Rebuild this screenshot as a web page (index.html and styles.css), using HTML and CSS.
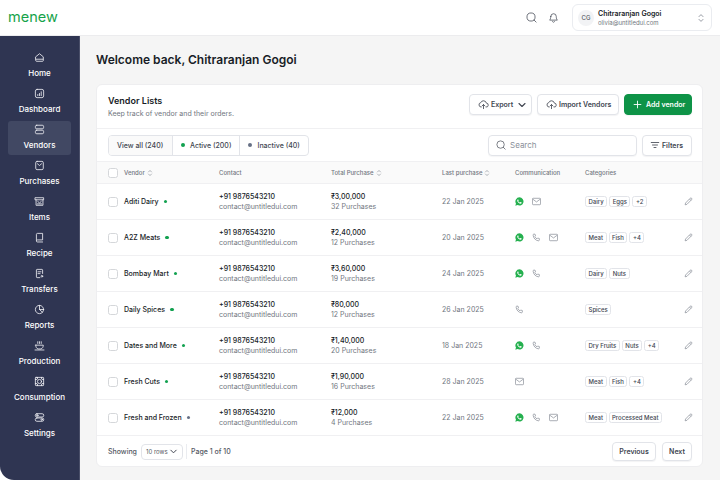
FILE: index.html
```html
<!DOCTYPE html>
<html lang="en">
<head>
<meta charset="utf-8">
<title>Vendors</title>
<link rel="stylesheet" href="styles.css">
</head>
<body>
<svg width="0" height="0" class="defs">
  <defs>
    <symbol id="wa" viewBox="0 0 16 16"><path fill="#25b04f" d="M8 .6a7.300 7.300 0 0 0-6.300 11L.6 15.400l3.900-1A7.300 7.300 0 1 0 8 .6z"/><path fill="#fff" d="M5.600 4.200c-.3 0-.7.1-1 .5-.4.5-.8 1.100-.7 2 .2 1.100 1 2.400 2.200 3.500 1.400 1.200 2.600 1.800 3.700 1.800.9 0 1.700-.6 2-1.400.1-.4.1-.7 0-.8l-1.700-.9c-.2-.1-.4 0-.5.1l-.7.8c-.1.1-.3.2-.5.1-1.100-.5-2-1.300-2.600-2.400-.1-.2 0-.3.1-.4l.5-.7c.1-.2.100-.3 0-.5l-.7-1.500c-.1-.2-.3-.2-.5-.2z"/></symbol>
    <symbol id="phone" viewBox="0 0 16 16"><path fill="none" stroke="#8b909a" stroke-width="1.300" stroke-linejoin="round" d="M3 2h2.300l1 3-1.400 1.200c.8 1.900 2.200 3.300 4 4.100l1.200-1.400 3 1V12.300c0 .9-.7 1.700-1.600 1.600C6.500 13.400 2.600 9.500 2 4 1.900 2.800 2.300 2 3 2z"/></symbol>
    <symbol id="mail" viewBox="0 0 16 16"><rect x=".8" y="2.300" width="14.400" height="11.400" rx="1.400" fill="none" stroke="#8b909a" stroke-width="1.300"/><path d="M1.300 3.800 8 8.800l6.700-5" fill="none" stroke="#8b909a" stroke-width="1.300"/></symbol>
    <symbol id="pen" viewBox="0 0 16 16"><path fill="none" stroke="#8b909a" stroke-width="1.300" stroke-linejoin="round" d="M11 2.200a1.500 1.500 0 0 1 2.500 2.500l-8.300 8.400-3.200.8.800-3.200zM9.800 3.600l2.500 2.500"/></symbol>
    <symbol id="sort" viewBox="0 0 8 10"><path fill="none" stroke="#8b909a" stroke-width=".9" stroke-linecap="round" stroke-linejoin="round" d="M2 3.600 4 1.600l2 2M2 6.400l2 2 2-2"/></symbol>
    <symbol id="cloud" viewBox="0 0 16 16"><path fill="none" stroke="#414651" stroke-width="1.200" stroke-linecap="round" stroke-linejoin="round" d="M4.500 11.800A3.300 3.300 0 0 1 4 5.300a4.300 4.300 0 0 1 8.200.7 2.900 2.900 0 0 1-.4 5.800M8 14V8.200M5.800 10.200 8 8l2.200 2.200"/></symbol>
    <symbol id="chev" viewBox="0 0 10 10"><path fill="none" stroke="#414651" stroke-width="1.100" stroke-linecap="round" stroke-linejoin="round" d="M2 3.500 5 6.500l3-3"/></symbol>
    <symbol id="search" viewBox="0 0 16 16"><circle cx="7.300" cy="7.300" r="5.900" fill="none" stroke="#535862" stroke-width="1.200"/><path d="m11.700 11.700 3 3" stroke="#535862" stroke-width="1.200" stroke-linecap="round"/></symbol>
  </defs>
</svg>
<div class="app">
  <header class="topbar">
    <div class="logo">menew</div>
    <div class="top-actions">
      <svg class="top-icon" viewBox="0 0 16 16"><use href="#search"/></svg>
      <svg class="top-icon" viewBox="0 0 16 16"><path fill="none" stroke="#535862" stroke-width="1.200" stroke-linecap="round" stroke-linejoin="round" d="M4 6.500a4 4 0 0 1 8 0c0 3 .8 4.300 1.600 5.300H2.400C3.200 10.800 4 9.500 4 6.500zM6.500 14a1.700 1.700 0 0 0 3 0"/></svg>
      <div class="user">
        <div class="avatar">CG</div>
        <div class="user-text"><div class="user-name">Chitraranjan Gogoi</div><div class="user-mail">olivia@untitledui.com</div></div>
        <svg class="user-sort" viewBox="0 0 8 10"><use href="#sort"/></svg>
      </div>
    </div>
  </header>
  <div class="body">
    <nav class="sidebar">
      <a class="nav-item"><svg viewBox="0 0 16 16"><path d="M2.500 7 8 2.500 13.500 7v5.500c0 .6-.4 1-1 1h-9c-.6 0-1-.4-1-1zM3 10.500h10"/></svg><span>Home</span></a>
      <a class="nav-item"><svg viewBox="0 0 16 16"><rect x="2" y="2" width="12" height="12" rx="2.500"/><path d="M5.500 11V9.500M8 11V8M10.500 11V5.500"/></svg><span>Dashboard</span></a>
      <a class="nav-item active"><svg viewBox="0 0 16 16"><rect x="2" y="1.800" width="12" height="5.200" rx="2"/><rect x="2" y="9" width="12" height="5.200" rx="2"/></svg><span>Vendors</span></a>
      <a class="nav-item"><svg viewBox="0 0 16 16"><rect x="2.500" y="2" width="11" height="12" rx="2"/><path d="M5 5.500 8 8l3-2.500"/></svg><span>Purchases</span></a>
      <a class="nav-item"><svg viewBox="0 0 16 16"><path d="M2 2.500h12v3H2zM3 5.500v8h10v-8M5.500 8 8 10l2.500-2M5 11.500h6"/></svg><span>Items</span></a>
      <a class="nav-item"><svg viewBox="0 0 16 16"><path d="M3.500 12V3.500c0-.9.600-1.500 1.500-1.500h7.500v9.500H5a1.500 1.500 0 0 0 0 3h7.500"/></svg><span>Recipe</span></a>
      <a class="nav-item"><svg viewBox="0 0 16 16"><path d="M12.500 8V3c0-.6-.4-1-1-1h-7c-.6 0-1 .4-1 1v10c0 .6.400 1 1 1h4M5.800 5.500h4.400M5.800 8.200h3"/><circle cx="11.500" cy="12" r="1.200"/></svg><span>Transfers</span></a>
      <a class="nav-item"><svg viewBox="0 0 16 16"><circle cx="8" cy="8" r="6"/><path d="M8 2v6l4.300 4M8 8h6"/></svg><span>Reports</span></a>
      <a class="nav-item"><svg viewBox="0 0 16 16"><path d="M2.500 7.500h11c0 3-1.500 5-3.500 5.500H6c-2-.5-3.500-2.500-3.500-5.500zM5.500 5V2.500M8 5V2.500M10.500 5V2.500M1.500 14.500h13"/></svg><span>Production</span></a>
      <a class="nav-item"><svg viewBox="0 0 16 16"><rect x="2" y="2" width="12" height="12" rx="1"/><circle cx="8" cy="8" r="3"/><path d="M2 5h2M12 5h2M2 11h2M12 11h2M5 2v2M11 2v2M5 12v2M11 12v2"/></svg><span>Consumption</span></a>
      <a class="nav-item"><svg viewBox="0 0 16 16"><rect x="1.800" y="2.500" width="12.400" height="4.800" rx="2.400"/><rect x="1.800" y="8.700" width="12.400" height="4.800" rx="2.400"/><circle cx="4.800" cy="4.900" r="1.100"/><circle cx="11.200" cy="11.100" r="1.100"/></svg><span>Settings</span></a>
    </nav>
    <main class="main">
      <h1 class="title">Welcome back, Chitraranjan Gogoi</h1>
      <section class="card">
        <div class="card-head">
          <div class="head-text">
            <h2 class="card-title">Vendor Lists</h2>
            <p class="card-sub">Keep track of vendor and their orders.</p>
          </div>
          <div class="head-actions">
            <button class="btn btn-export"><svg viewBox="0 0 16 16"><use href="#cloud"/></svg>Export<svg class="small" viewBox="0 0 10 10"><use href="#chev"/></svg></button>
            <button class="btn btn-import"><svg viewBox="0 0 16 16"><use href="#cloud"/></svg>Import Vendors</button>
            <button class="btn btn-add"><svg viewBox="0 0 12 12"><path d="M6 1.500v9M1.500 6h9" stroke="#fff" stroke-width="1.200" stroke-linecap="round"/></svg>Add vendor</button>
          </div>
        </div>
        <div class="toolbar">
          <div class="segments">
            <span class="seg seg-on">View all (240)</span>
            <span class="seg"><i class="dot green"></i>Active (200)</span>
            <span class="seg"><i class="dot grey"></i>Inactive (40)</span>
          </div>
          <div class="tool-right">
            <div class="search"><svg viewBox="0 0 16 16"><use href="#search"/></svg>Search</div>
            <button class="btn btn-filter"><svg viewBox="0 0 12 12"><path d="M1.500 3h9M3 6h6M4.800 9h2.400" stroke="#414651" stroke-width="1" stroke-linecap="round"/></svg>Filters</button>
          </div>
        </div>
        <div class="row row-head">
          <span class="check"></span>
          <span class="th">Vendor<svg viewBox="0 0 8 10"><use href="#sort"/></svg></span>
          <span class="th">Contact</span>
          <span class="th">Total Purchase<svg viewBox="0 0 8 10"><use href="#sort"/></svg></span>
          <span class="th">Last purchase<svg viewBox="0 0 8 10"><use href="#sort"/></svg></span>
          <span class="th">Communication</span>
          <span class="th">Categories</span>
          <span></span>
        </div>
        <div class="row">
          <span class="check"></span>
          <span class="vendor">Aditi Dairy<i class="dot green"></i></span>
          <span class="two"><b>+91 9876543210</b><em>contact@untitledui.com</em></span>
          <span class="two"><b>₹3,00,000</b><em>32 Purchases</em></span>
          <span class="date">22 Jan 2025</span>
          <span class="comm"><svg><use href="#wa"/></svg><svg><use href="#mail"/></svg></span>
          <span class="tags"><i>Dairy</i><i>Eggs</i><i>+2</i></span>
          <svg class="edit"><use href="#pen"/></svg>
        </div>
        <div class="row">
          <span class="check"></span>
          <span class="vendor">A2Z Meats<i class="dot green"></i></span>
          <span class="two"><b>+91 9876543210</b><em>contact@untitledui.com</em></span>
          <span class="two"><b>₹2,40,000</b><em>12 Purchases</em></span>
          <span class="date">20 Jan 2025</span>
          <span class="comm"><svg><use href="#wa"/></svg><svg><use href="#phone"/></svg><svg><use href="#mail"/></svg></span>
          <span class="tags"><i>Meat</i><i>Fish</i><i>+4</i></span>
          <svg class="edit"><use href="#pen"/></svg>
        </div>
        <div class="row">
          <span class="check"></span>
          <span class="vendor">Bombay Mart<i class="dot green"></i></span>
          <span class="two"><b>+91 9876543210</b><em>contact@untitledui.com</em></span>
          <span class="two"><b>₹3,60,000</b><em>19 Purchases</em></span>
          <span class="date">24 Jan 2025</span>
          <span class="comm"><svg><use href="#wa"/></svg><svg><use href="#phone"/></svg></span>
          <span class="tags"><i>Dairy</i><i>Nuts</i></span>
          <svg class="edit"><use href="#pen"/></svg>
        </div>
        <div class="row">
          <span class="check"></span>
          <span class="vendor">Daily Spices<i class="dot green"></i></span>
          <span class="two"><b>+91 9876543210</b><em>contact@untitledui.com</em></span>
          <span class="two"><b>₹80,000</b><em>12 Purchases</em></span>
          <span class="date">26 Jan 2025</span>
          <span class="comm"><svg><use href="#phone"/></svg></span>
          <span class="tags"><i>Spices</i></span>
          <svg class="edit"><use href="#pen"/></svg>
        </div>
        <div class="row">
          <span class="check"></span>
          <span class="vendor">Dates and More<i class="dot green"></i></span>
          <span class="two"><b>+91 9876543210</b><em>contact@untitledui.com</em></span>
          <span class="two"><b>₹1,40,000</b><em>20 Purchases</em></span>
          <span class="date">18 Jan 2025</span>
          <span class="comm"><svg><use href="#wa"/></svg><svg><use href="#phone"/></svg></span>
          <span class="tags"><i>Dry Fruits</i><i>Nuts</i><i>+4</i></span>
          <svg class="edit"><use href="#pen"/></svg>
        </div>
        <div class="row">
          <span class="check"></span>
          <span class="vendor">Fresh Cuts<i class="dot green"></i></span>
          <span class="two"><b>+91 9876543210</b><em>contact@untitledui.com</em></span>
          <span class="two"><b>₹1,90,000</b><em>16 Purchases</em></span>
          <span class="date">28 Jan 2025</span>
          <span class="comm"><svg><use href="#mail"/></svg></span>
          <span class="tags"><i>Meat</i><i>Fish</i><i>+4</i></span>
          <svg class="edit"><use href="#pen"/></svg>
        </div>
        <div class="row">
          <span class="check"></span>
          <span class="vendor">Fresh and Frozen<i class="dot grey"></i></span>
          <span class="two"><b>+91 9876543210</b><em>contact@untitledui.com</em></span>
          <span class="two"><b>₹12,000</b><em>4 Purchases</em></span>
          <span class="date">22 Jan 2025</span>
          <span class="comm"><svg><use href="#wa"/></svg><svg><use href="#phone"/></svg><svg><use href="#mail"/></svg></span>
          <span class="tags"><i>Meat</i><i>Processed Meat</i></span>
          <svg class="edit"><use href="#pen"/></svg>
        </div>
        <footer class="foot">
          <span class="foot-label">Showing</span>
          <span class="rows-select">10 rows<svg viewBox="0 0 10 10"><use href="#chev"/></svg></span>
          <span class="foot-page">Page 1 of 10</span>
          <span class="foot-nav"><button class="btn btn-prev">Previous</button><button class="btn btn-next">Next</button></span>
        </footer>
      </section>
    </main>
  </div>
</div>
</body>
</html>
```
FILE: styles.css
```css
* { box-sizing: border-box; }
html, body { margin: 0; padding: 0; }
body { width: 720px; height: 480px; overflow: hidden; background: #fff; font-family: Inter, "Liberation Sans", sans-serif; color: #181d27; }
.defs { display: block; height: 0; }
.app { display: flex; flex-direction: column; width: 720px; height: 480px; }

.topbar { height: 36px; flex: none; display: flex; align-items: center; justify-content: space-between; padding: 0 8px; background: #fff; border-bottom: 1px solid #ececee; }
.logo { font-family: Inter, sans-serif; font-size: 14.500px; font-weight: 400; color: #16a34a; line-height: 1; }
.top-actions { display: flex; align-items: center; }
.top-icon { width: 11px; height: 11px; margin-right: 11px; }
.user { width: 140px; height: 27px; margin-left: 2px; display: flex; align-items: center; padding: 0 5px; background: #fff; border: 1px solid #eaecf0; border-radius: 6px; }
.avatar { width: 16px; height: 16px; border-radius: 50%; background: #f2f3f5; color: #535862; font-size: 6px; font-weight: 500; display: flex; align-items: center; justify-content: center; margin-right: 4px; }
.user-name { font-size: 7px; font-weight: 600; line-height: 9px; color: #181d27; }
.user-mail { font-size: 6px; line-height: 9px; color: #717680; }
.user-sort { width: 8px; height: 10px; margin-left: auto; margin-right: 1px; }

.body { flex: 1; display: flex; min-height: 0; }
.sidebar { width: 80px; flex: none; padding: 13px 8px 0; display: flex; flex-direction: column; gap: 2px; background: #2f3552; border-right: 1px solid #4a4f69; border-bottom-left-radius: 14px; }
.nav-item { height: 34px; flex: none; display: flex; flex-direction: column; align-items: center; justify-content: flex-start; padding-top: 3px; border-radius: 3px; color: #fff; font-size: 8px; font-weight: 500; line-height: 10px; }
.nav-item svg { width: 11px; height: 11px; margin-bottom: 5px; fill: none; stroke: #f0f1f5; stroke-width: 1.200; stroke-linecap: round; stroke-linejoin: round; }
.nav-item.active { background: #414863; }

.main { flex: 1; min-width: 0; padding: 16px 17px 0 16px; background: #f5f5f5; }
.title { margin: 0 0 16px; font-size: 12px; line-height: 16px; font-weight: 600; color: #181d27; }
.card { height: 383px; background: #fff; border: 1px solid #eeeef0; border-radius: 6px; overflow: hidden; }
.card-head { height: 44px; display: flex; align-items: center; justify-content: space-between; padding: 0 10px 0 11px; border-bottom: 1px solid #f0f0f2; }
.card-title { margin: 0; font-size: 9px; line-height: 12px; font-weight: 600; color: #181d27; }
.card-sub { margin: 2px 0 0; font-size: 7px; line-height: 9px; color: #717680; }
.head-actions { display: flex; gap: 5px; align-self: flex-start; margin-top: 9px; }
.btn { height: 21px; display: inline-flex; align-items: center; padding: 0 8px; background: #fff; border: 1px solid #e2e4e9; border-radius: 4px; font-family: inherit; font-size: 7px; font-weight: 600; color: #414651; white-space: nowrap; box-shadow: 0 1px 1px rgba(16,24,40,.05); }
.btn svg { width: 11px; height: 11px; margin-right: 2px; flex: none; }
.btn svg.small { width: 10px; height: 10px; margin: 0 0 0 4px; }
.btn-export { width: 63px; }
.btn-import { width: 82px; }
.btn-add { background: #0e9347; border-color: #0e9347; color: #fff; width: 68px; }
.btn-add svg { width: 9px; height: 9px; margin-right: 4px; }

.toolbar { height: 32px; display: flex; align-items: center; justify-content: space-between; padding: 0 10px 0 11px; }
.segments { display: flex; height: 21px; border: 1px solid #e2e4e9; border-radius: 4px; overflow: hidden; font-size: 7px; font-weight: 500; color: #414651; }
.seg { display: flex; align-items: center; padding: 0 8px; border-left: 1px solid #e2e4e9; }
.seg:first-child { border-left: 0; min-width: 63px; }
.seg:nth-child(2) { min-width: 67px; }
.seg-on { background: #fafafa; }
.dot { display: inline-block; width: 4px; height: 4px; border-radius: 50%; margin-right: 5px; }
.dot.green { background: #12a150; }
.dot.grey { background: #667085; }
.tool-right { display: flex; gap: 5px; }
.search { width: 149px; height: 21px; display: flex; align-items: center; padding: 0 7px; background: #fff; border: 1px solid #e2e4e9; border-radius: 4px; font-size: 8px; color: #8a8f99; box-shadow: 0 1px 1px rgba(16,24,40,.04); }
.search svg { width: 10px; height: 10px; margin-right: 4px; }
.btn-filter { width: 50px; padding: 0 7px; }
.btn-filter svg { width: 10px; height: 10px; }

.row { height: 36px; display: grid; grid-template-columns: 16px 95px 112px 111px 73px 70px 99px 8px; align-items: center; padding-left: 11px; border-top: 1px solid #f0f0f2; }
.row-head { height: 22px; background: #fafafa; }
.check { width: 10px; height: 10px; background: #fff; border: 1px solid #d5d7da; border-radius: 2.500px; }
.th { display: flex; align-items: center; gap: 2px; font-size: 6px; font-weight: 500; color: #717680; }
.th svg { width: 6px; height: 8px; }
.vendor { display: flex; align-items: center; font-size: 7px; font-weight: 500; color: #181d27; }
.vendor .dot { width: 3.500px; height: 3.500px; margin: 0 0 0 5px; }
.two { display: flex; flex-direction: column; gap: 1px; }
.two b { font-size: 7px; line-height: 9px; font-weight: 500; color: #181d27; }
.two em { font-size: 7px; line-height: 9px; font-style: normal; color: #717680; }
.date { font-size: 7px; color: #717680; }
.comm { display: flex; align-items: center; gap: 8px; }
.comm svg { width: 9px; height: 9px; }
.tags { display: flex; gap: 2px; }
.tags i { height: 11px; display: flex; align-items: center; padding: 0 2.500px; background: #fff; border: 1px solid #e2e4e9; border-radius: 2.500px; font-style: normal; font-size: 6px; font-weight: 500; color: #414651; }
.edit { width: 9px; height: 9px; }

.foot { height: 32px; display: flex; align-items: center; padding: 0 10px 0 11px; border-top: 1px solid #f0f0f2; font-size: 7px; color: #535862; }
.foot-label { font-weight: 500; }
.rows-select { width: 42px; height: 16px; margin-left: 4px; display: flex; align-items: center; justify-content: space-between; padding: 0 4px; border: 1px solid #e2e4e9; border-radius: 4px; font-size: 6px; }
.rows-select svg { width: 9px; height: 9px; }
.foot-page { margin-left: 3px; padding: 3px 0 3px 4px; border-left: 1px solid #eaecf0; font-weight: 500; }
.foot-nav { margin-left: auto; display: flex; gap: 6px; }
.btn-prev, .btn-next { height: 19px; justify-content: center; padding: 0; }
.btn-prev { width: 44px; }
.btn-next { width: 30px; }
```
